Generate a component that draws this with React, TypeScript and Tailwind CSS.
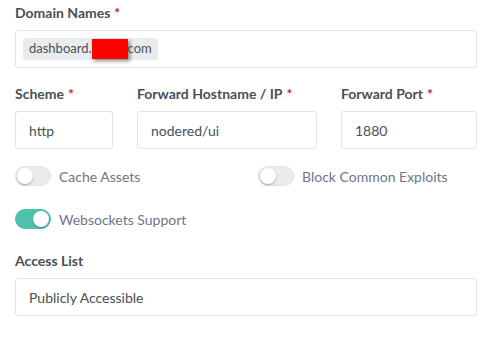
import React from 'react';

const font = { fontFamily: 'Lato, "Noto Sans", sans-serif' };

function Label({ text, required }: { text: string; required?: boolean }) {
  return (
    <div className="text-[14px] font-bold text-[#495057] leading-[20px] mb-[7px]">
      {text}
      {required && <span className="text-[#cd201f] ml-[4px]">*</span>}
    </div>
  );
}

function Input({ value }: { value: string }) {
  return (
    <div className="h-[38px] border border-[#e0e5ec] rounded-[3px] bg-white flex items-center px-[13px] text-[14px] text-[#495057]">
      {value}
    </div>
  );
}

function Toggle({ on, label }: { on?: boolean; label: string }) {
  return (
    <div className="flex items-center gap-[8px] h-[20px]">
      <div
        className={
          on
            ? 'w-[36px] h-[20px] rounded-full bg-[#4cc3aa] border border-[#4cc3aa] flex items-center justify-end px-[1px]'
            : 'w-[36px] h-[20px] rounded-full bg-[#e9ecef] border border-[#dfe3e8] flex items-center justify-start px-[1px]'
        }
      >
        <div className="w-[16px] h-[16px] rounded-full bg-white shadow-[0_1px_2px_rgba(0,0,0,0.3)]" />
      </div>
      <span className="text-[14px] text-[#6e7687]">{label}</span>
    </div>
  );
}

export default function App() {
  return (
    <div className="w-[492px] h-[341px] bg-white px-[15px] pt-[3px]" style={font}>
      {/* Domain names */}
      <Label text="Domain Names" required />
      <div className="h-[38px] border border-[#e0e5ec] rounded-[3px] flex items-center px-[7px]">
        <div className="h-[22px] bg-[#e9ecef] rounded-[3px] flex items-center px-[6px] text-[13px] text-[#495057]">
          <span>dashboard.</span>
          <span className="inline-block w-[36px] h-[20px] bg-[#ff0000] shadow-[2px_2px_4px_rgba(0,0,0,0.45)]" />
          <span>com</span>
        </div>
      </div>

      {/* Scheme / host / port */}
      <div className="grid grid-cols-[98px_180px_1fr] gap-x-[24px] mt-[16px]">
        <div>
          <Label text="Scheme" required />
          <Input value="http" />
        </div>
        <div>
          <Label text="Forward Hostname / IP" required />
          <Input value="nodered/ui" />
        </div>
        <div>
          <Label text="Forward Port" required />
          <Input value="1880" />
        </div>
      </div>

      {/* Switches */}
      <div className="grid grid-cols-2 gap-x-[24px] gap-y-[23px] mt-[17px]">
        <Toggle label="Cache Assets" />
        <Toggle label="Block Common Exploits" />
        <Toggle on label="Websockets Support" />
      </div>

      {/* Access list */}
      <div className="mt-[22px]">
        <Label text="Access List" />
        <Input value="Publicly Accessible" />
      </div>
    </div>
  );
}
